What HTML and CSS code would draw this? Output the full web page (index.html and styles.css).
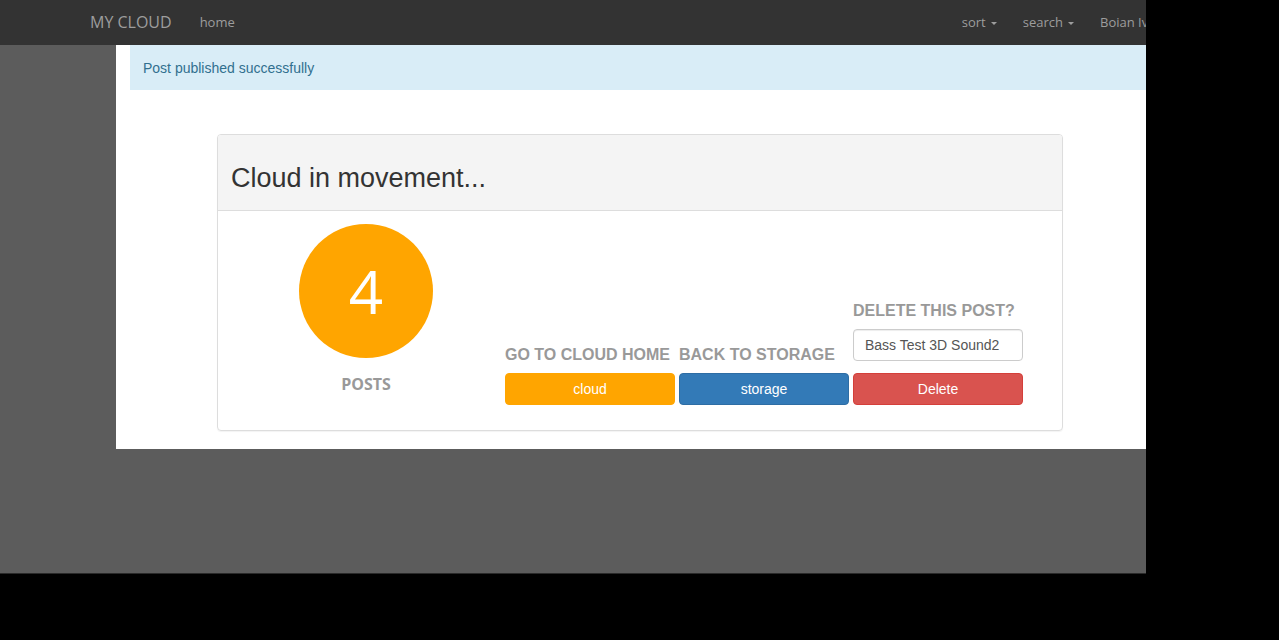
FILE: index.html
```html
<!DOCTYPE html>
<html>
<head>
<meta charset="utf-8">
<title>MY CLOUD</title>
<link rel="stylesheet" href="styles.css">
</head>
<body>
<div class="screen">
  <nav class="navbar">
    <a class="brand">MY CLOUD</a>
    <ul class="nav">
      <li><a>home</a></li>
    </ul>
    <ul class="nav nav-right">
      <li><a>sort<span class="caret"></span></a></li>
      <li><a>search<span class="caret"></span></a></li>
      <li><a>Boian Ivanov<span class="caret"></span></a></li>
    </ul>
  </nav>
  <div class="container">
    <div class="alert">Post published successfully</div>
    <div class="panel">
      <div class="panel-heading">
        <h3 class="panel-title">Cloud in movement...</h3>
      </div>
      <div class="panel-body">
        <div class="stat">
          <div class="circle">4</div>
          <div class="stat-label">POSTS</div>
        </div>
        <div class="action">
          <h4 class="action-label">GO TO CLOUD HOME</h4>
          <a class="btn btn-orange">cloud</a>
        </div>
        <div class="action">
          <h4 class="action-label">BACK TO STORAGE</h4>
          <a class="btn btn-blue">storage</a>
        </div>
        <div class="action">
          <h4 class="action-label">DELETE THIS POST?</h4>
          <input class="field" type="text" value="Bass Test 3D Sound2">
          <a class="btn btn-red">Delete</a>
        </div>
      </div>
    </div>
  </div>
</div>
</body>
</html>
```
FILE: styles.css
```css
html, body {
  margin: 0;
  padding: 0;
  background: #000;
}

.screen {
  width: 1146px;
  height: 573px;
  border-bottom: 1px solid #2a2a2a;
  background: #5c5c5c;
  overflow: hidden;
}

.navbar {
  display: flex;
  align-items: center;
  height: 45px;
  background: #333;
  padding-left: 76px;
  font-family: "Open Sans", sans-serif;
  color: #9d9d9d;
  width: 1400px;
}

.brand {
  font-size: 16px;
  padding: 0 14px;
  line-height: 45px;
}

.nav {
  display: flex;
  list-style: none;
  margin: 0;
  padding: 0;
}

.nav a {
  display: flex;
  align-items: center;
  font-size: 13px;
  line-height: 45px;
  padding: 0 14px;
}

.nav-right {
  margin-left: 700px;
}

.nav-right a {
  padding: 0 13px;
}

.caret {
  display: inline-block;
  width: 0;
  height: 0;
  margin-left: 5px;
  margin-top: 2px;
  border-top: 3px solid #9d9d9d;
  border-left: 3px solid transparent;
  border-right: 3px solid transparent;
}

.container {
  width: 1170px;
  margin-left: 116px;
  padding: 0 14px 18px;
  box-sizing: border-box;
  background: #fff;
}

.alert {
  height: 45px;
  display: flex;
  align-items: center;
  padding-left: 13px;
  background: #d9edf7;
  color: #31708f;
  font-family: "Liberation Sans", Arial, sans-serif;
  font-size: 14px;
}

.panel {
  width: 846px;
  margin: 44px 0 0 87px;
  box-sizing: border-box;
  border: 1px solid #ddd;
  border-radius: 4px;
  box-shadow: 0 1px 1px rgba(0, 0, 0, 0.05);
  font-family: "Liberation Sans", Arial, sans-serif;
}

.panel-heading {
  background: #f4f4f4;
  border-bottom: 1px solid #ddd;
  border-radius: 3px 3px 0 0;
  padding: 28px 13px 17px;
}

.panel-title {
  margin: 0;
  font-size: 27px;
  font-weight: normal;
  line-height: 30px;
  color: #333;
}

.panel-body {
  display: flex;
  padding: 13px 14px 25px;
}

.stat {
  width: 268px;
  display: flex;
  flex-direction: column;
  align-items: center;
  margin-right: 5px;
  padding-bottom: 10px;
}

.circle {
  width: 134px;
  height: 134px;
  border-radius: 50%;
  background: #ffa500;
  color: #fff;
  display: flex;
  align-items: center;
  justify-content: center;
  font-family: "Open Sans", sans-serif;
  font-size: 60px;
}

.stat-label {
  margin-top: 15px;
  font-family: "Open Sans", sans-serif;
  font-weight: bold;
  font-size: 16px;
  line-height: 22px;
  color: #999;
}

.action {
  width: 170px;
  margin-right: 4px;
  display: flex;
  flex-direction: column;
  justify-content: flex-end;
}

.action-label {
  margin: 0 0 8px;
  font-size: 16px;
  line-height: 20px;
  font-weight: bold;
  color: #999;
  white-space: nowrap;
}

.field {
  display: block;
  width: 170px;
  height: 32px;
  box-sizing: border-box;
  margin: 0 0 12px;
  padding: 0 11px;
  border: 1px solid #ccc;
  border-radius: 4px;
  box-shadow: inset 0 1px 1px rgba(0, 0, 0, 0.075);
  font-family: "Liberation Sans", Arial, sans-serif;
  font-size: 14px;
  color: #555;
  outline: none;
}

.btn {
  display: flex;
  align-items: center;
  justify-content: center;
  height: 32px;
  box-sizing: border-box;
  border: 1px solid transparent;
  border-radius: 4px;
  color: #fff;
  font-size: 14px;
}

.btn-orange {
  background: #ffa500;
  border-color: #ffa500;
}

.btn-blue {
  background: #337ab7;
  border-color: #2e6da4;
}

.btn-red {
  background: #d9534f;
  border-color: #d43f3a;
}
```
